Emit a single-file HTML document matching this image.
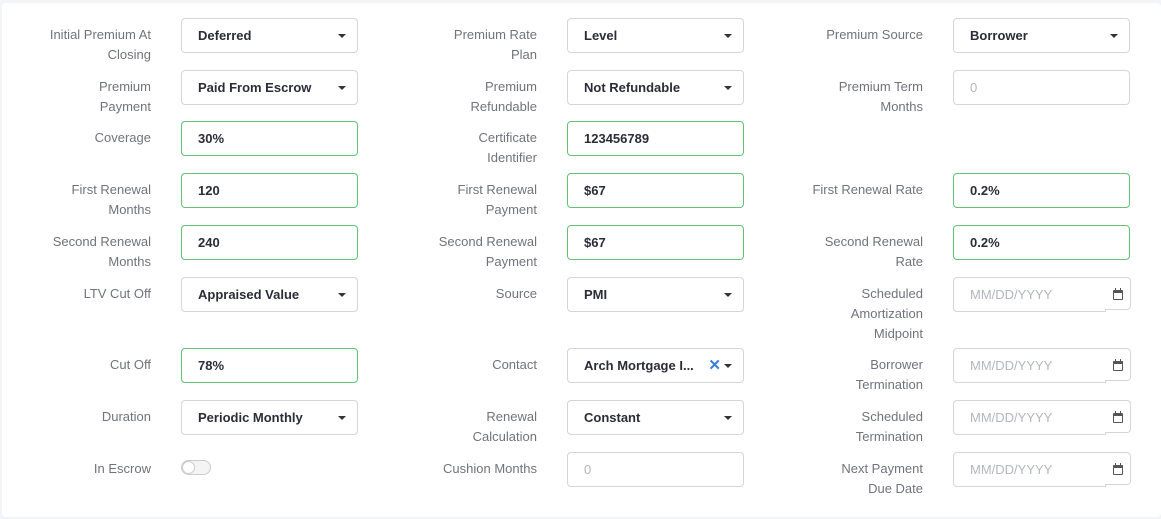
<!DOCTYPE html>
<html><head><meta charset="utf-8"><style>
*{box-sizing:border-box;margin:0;padding:0}
body{width:1161px;height:519px;background:#f3f4f7;font-family:"Liberation Sans",sans-serif;position:relative;overflow:hidden}
.card{position:absolute;left:2px;top:3px;width:1159px;height:514px;background:#fff;border-radius:4px}
.l{position:absolute;width:150px;text-align:right;font-size:13px;line-height:20px;color:#70737c;white-space:nowrap}
.i{position:absolute;width:177px;height:35px;border:1px solid #d4d6da;border-radius:4px;font-size:13px;font-weight:bold;color:#2a2d38;padding-left:16px;line-height:33px;background:#fff}
.i.g{border-color:#62c276}
.ph{font-weight:normal;color:#b3b6bf}
.s::after{content:"";position:absolute;right:11px;top:15px;border-left:4px solid transparent;border-right:4px solid transparent;border-top:4px solid #333}
.d{width:153px;border-radius:4px 0 0 4px}
.b{position:absolute;width:26px;height:33px;border:1px solid #d4d6da;border-left:none;border-radius:0 4px 4px 0;background:#fff}
.b::before{content:"";position:absolute;left:8px;top:12px;width:10px;height:10px;border:1.5px solid #555;border-top-width:3px;border-radius:1px;box-sizing:border-box}
.b::after{content:"";position:absolute;left:10px;top:10px;width:6px;height:2px;border-left:1.5px solid #555;border-right:1.5px solid #555;box-sizing:border-box}
.x{position:absolute;right:22px;top:0;color:#3b7ddd;font-size:15px}
.t{position:absolute;left:181px;top:460px;width:30px;height:15px;border:1px solid #ccc;border-radius:8px;background:#f4f4f4}
.t::before{content:"";position:absolute;left:0;top:0;width:13px;height:13px;border-radius:50%;background:#fff;border:1px solid #ccc;box-sizing:border-box}
</style></head><body><div class="card"></div>

<div class="l" style="left:1px;top:25px">Initial Premium At<br>Closing</div>
<div class="i s" style="left:181px;top:18px">Deferred</div>
<div class="l" style="left:387px;top:25px">Premium Rate<br>Plan</div>
<div class="i s" style="left:567px;top:18px">Level</div>
<div class="l" style="left:773px;top:25px">Premium Source</div>
<div class="i s" style="left:953px;top:18px">Borrower</div>

<div class="l" style="left:1px;top:77px">Premium<br>Payment</div>
<div class="i s" style="left:181px;top:70px">Paid From Escrow</div>
<div class="l" style="left:387px;top:77px">Premium<br>Refundable</div>
<div class="i s" style="left:567px;top:70px">Not Refundable</div>
<div class="l" style="left:773px;top:77px">Premium Term<br>Months</div>
<div class="i ph" style="left:953px;top:70px">0</div>

<div class="l" style="left:1px;top:128px">Coverage</div>
<div class="i g" style="left:181px;top:121px">30%</div>
<div class="l" style="left:387px;top:128px">Certificate<br>Identifier</div>
<div class="i g" style="left:567px;top:121px">123456789</div>

<div class="l" style="left:1px;top:180px">First Renewal<br>Months</div>
<div class="i g" style="left:181px;top:173px">120</div>
<div class="l" style="left:387px;top:180px">First Renewal<br>Payment</div>
<div class="i g" style="left:567px;top:173px">$67</div>
<div class="l" style="left:773px;top:180px">First Renewal Rate</div>
<div class="i g" style="left:953px;top:173px">0.2%</div>

<div class="l" style="left:1px;top:232px">Second Renewal<br>Months</div>
<div class="i g" style="left:181px;top:225px">240</div>
<div class="l" style="left:387px;top:232px">Second Renewal<br>Payment</div>
<div class="i g" style="left:567px;top:225px">$67</div>
<div class="l" style="left:773px;top:232px">Second Renewal<br>Rate</div>
<div class="i g" style="left:953px;top:225px">0.2%</div>

<div class="l" style="left:1px;top:284px">LTV Cut Off</div>
<div class="i s" style="left:181px;top:277px">Appraised Value</div>
<div class="l" style="left:387px;top:284px">Source</div>
<div class="i s" style="left:567px;top:277px">PMI</div>
<div class="l" style="left:773px;top:284px">Scheduled<br>Amortization<br>Midpoint</div>
<div class="i ph d" style="left:953px;top:277px">MM/DD/YYYY</div><div class="b" style="left:1105px;top:277px"></div>

<div class="l" style="left:1px;top:355px">Cut Off</div>
<div class="i g" style="left:181px;top:348px">78%</div>
<div class="l" style="left:387px;top:355px">Contact</div>
<div class="i s" style="left:567px;top:348px">Arch Mortgage I...<span class="x">✕</span></div>
<div class="l" style="left:773px;top:355px">Borrower<br>Termination</div>
<div class="i ph d" style="left:953px;top:348px">MM/DD/YYYY</div><div class="b" style="left:1105px;top:348px"></div>

<div class="l" style="left:1px;top:407px">Duration</div>
<div class="i s" style="left:181px;top:400px">Periodic Monthly</div>
<div class="l" style="left:387px;top:407px">Renewal<br>Calculation</div>
<div class="i s" style="left:567px;top:400px">Constant</div>
<div class="l" style="left:773px;top:407px">Scheduled<br>Termination</div>
<div class="i ph d" style="left:953px;top:400px">MM/DD/YYYY</div><div class="b" style="left:1105px;top:400px"></div>

<div class="l" style="left:1px;top:459px">In Escrow</div>
<div class="t"></div>
<div class="l" style="left:387px;top:459px">Cushion Months</div>
<div class="i ph" style="left:567px;top:452px">0</div>
<div class="l" style="left:773px;top:459px">Next Payment<br>Due Date</div>
<div class="i ph d" style="left:953px;top:452px">MM/DD/YYYY</div><div class="b" style="left:1105px;top:452px"></div>
</body></html>
